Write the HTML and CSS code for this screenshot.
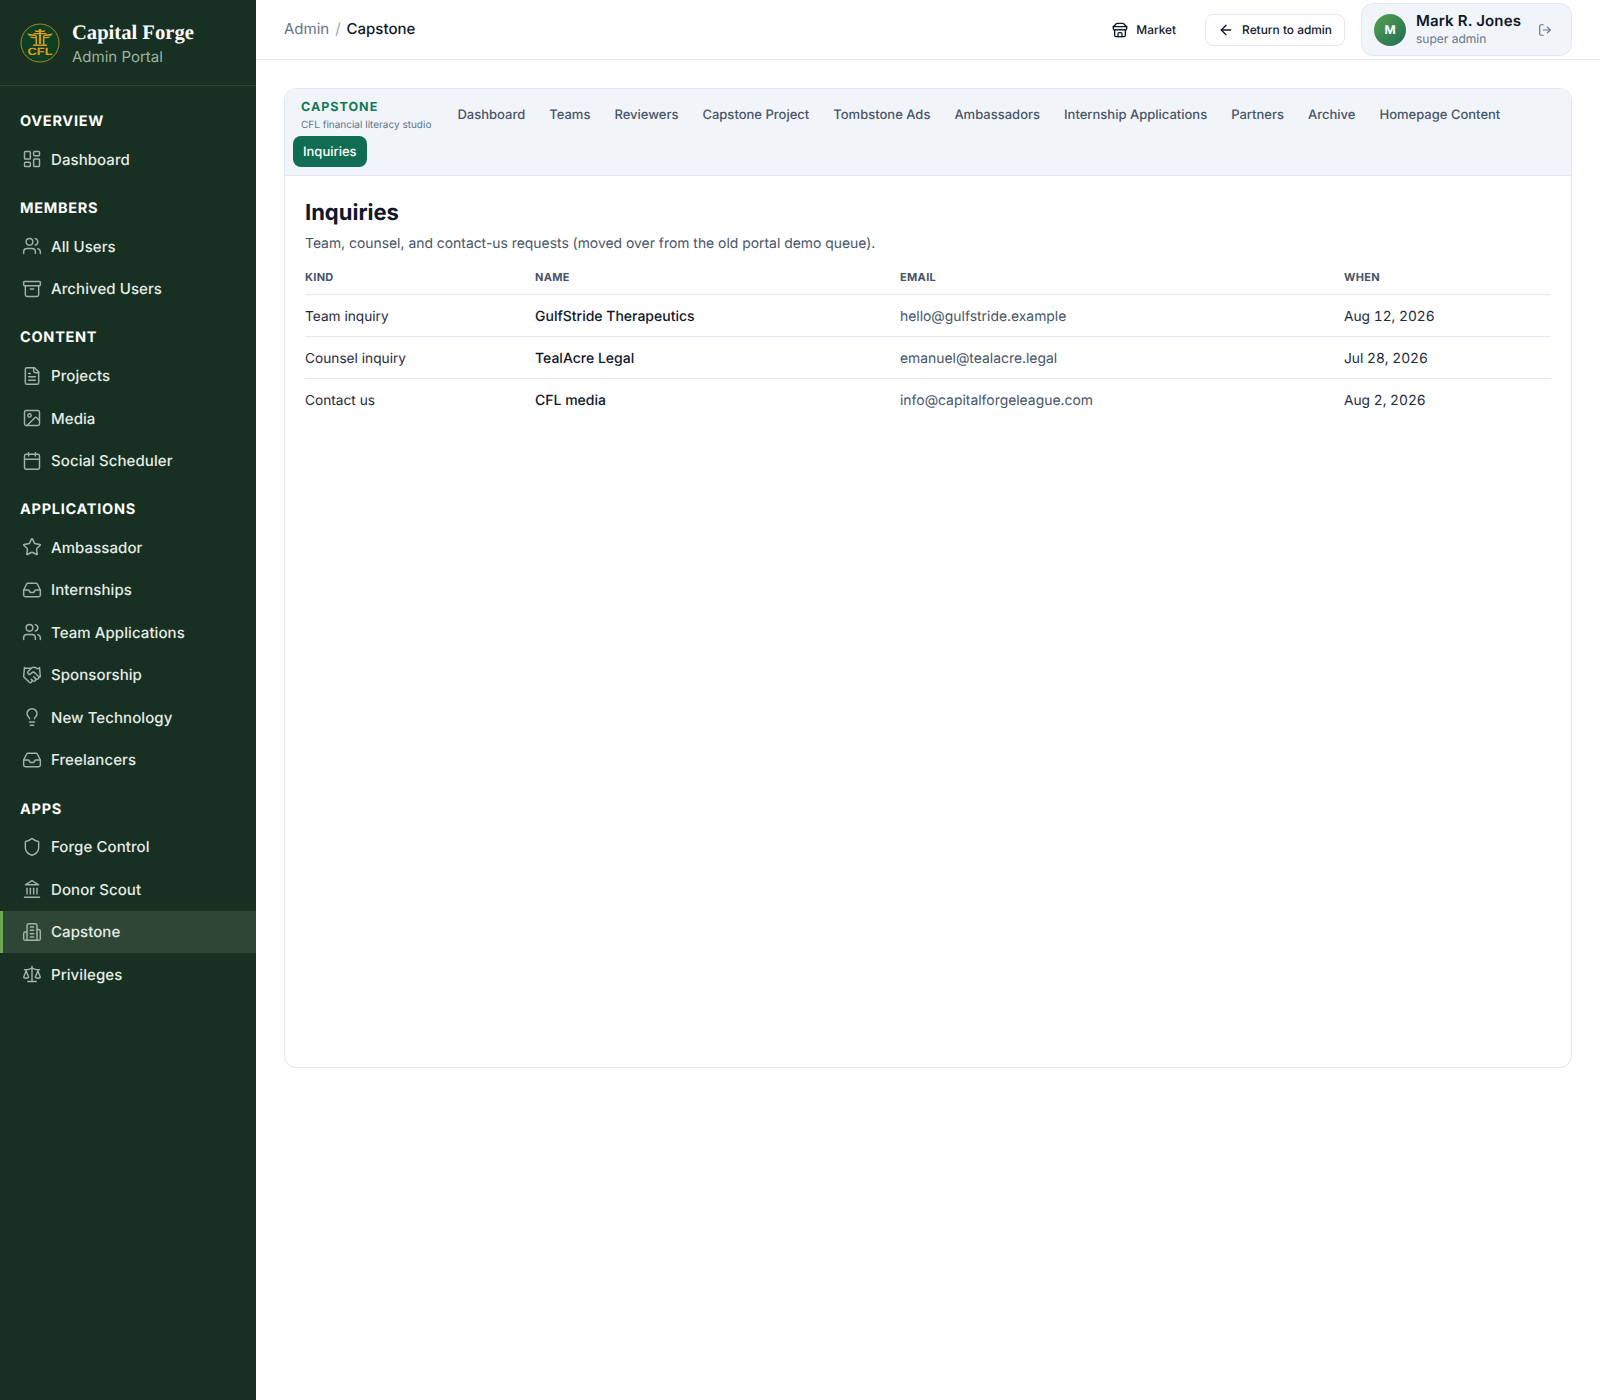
FILE: index.html
```html
<!DOCTYPE html>
<html lang="en">
<head>
<meta charset="utf-8">
<title>Capstone Inquiries</title>
<link rel="stylesheet" href="styles.css">
</head>
<body>
<svg class="sprite" width="0" height="0" aria-hidden="true">
<defs>
<symbol id="i-dash" viewBox="0 0 24 24"><rect x="3" y="3" width="7" height="9" rx="1"/><rect x="14" y="3" width="7" height="5" rx="1"/><rect x="14" y="12" width="7" height="9" rx="1"/><rect x="3" y="16" width="7" height="5" rx="1"/></symbol>
<symbol id="i-users" viewBox="0 0 24 24"><path d="M16 21v-2a4 4 0 0 0-4-4H6a4 4 0 0 0-4 4v2"/><circle cx="9" cy="7" r="4"/><path d="M22 21v-2a4 4 0 0 0-3-3.87"/><path d="M16 3.13a4 4 0 0 1 0 7.75"/></symbol>
<symbol id="i-archive" viewBox="0 0 24 24"><rect x="2" y="3" width="20" height="5" rx="1"/><path d="M4 8v11a2 2 0 0 0 2 2h12a2 2 0 0 0 2-2V8"/><path d="M10 12h4"/></symbol>
<symbol id="i-file" viewBox="0 0 24 24"><path d="M15 2H6a2 2 0 0 0-2 2v16a2 2 0 0 0 2 2h12a2 2 0 0 0 2-2V7Z"/><path d="M14 2v4a2 2 0 0 0 2 2h4"/><path d="M10 9H8"/><path d="M16 13H8"/><path d="M16 17H8"/></symbol>
<symbol id="i-image" viewBox="0 0 24 24"><rect x="3" y="3" width="18" height="18" rx="2"/><circle cx="9" cy="9" r="2"/><path d="m21 15-3.086-3.086a2 2 0 0 0-2.828 0L6 21"/></symbol>
<symbol id="i-cal" viewBox="0 0 24 24"><path d="M8 2v4"/><path d="M16 2v4"/><rect x="3" y="4" width="18" height="18" rx="2"/><path d="M3 10h18"/></symbol>
<symbol id="i-star" viewBox="0 0 24 24"><path d="M11.525 2.295a.53.53 0 0 1 .95 0l2.31 4.679a2.123 2.123 0 0 0 1.595 1.16l5.166.756a.53.53 0 0 1 .294.904l-3.736 3.638a2.123 2.123 0 0 0-.611 1.878l.882 5.14a.53.53 0 0 1-.771.56l-4.618-2.428a2.122 2.122 0 0 0-1.973 0L6.396 21.01a.53.53 0 0 1-.77-.56l.881-5.139a2.122 2.122 0 0 0-.611-1.879L2.16 9.795a.53.53 0 0 1 .294-.906l5.165-.755a2.122 2.122 0 0 0 1.597-1.16z"/></symbol>
<symbol id="i-inbox" viewBox="0 0 24 24"><polyline points="22 12 16 12 14 15 10 15 8 12 2 12"/><path d="M5.45 5.11 2 12v6a2 2 0 0 0 2 2h16a2 2 0 0 0 2-2v-6l-3.45-6.89A2 2 0 0 0 16.76 4H7.24a2 2 0 0 0-1.79 1.11z"/></symbol>
<symbol id="i-hand" viewBox="0 0 24 24"><path d="m11 17 2 2a1 1 0 1 0 3-3"/><path d="m14 14 2.5 2.5a1 1 0 1 0 3-3l-3.88-3.88a3 3 0 0 0-4.24 0l-.88.88a1 1 0 1 1-3-3l2.81-2.81a5.79 5.79 0 0 1 7.06-.87l.47.28a2 2 0 0 0 1.42.25L21 4"/><path d="m21 3 1 11h-2"/><path d="M3 3 2 14l6.5 6.5a1 1 0 1 0 3-3"/><path d="M3 4h8"/></symbol>
<symbol id="i-bulb" viewBox="0 0 24 24"><path d="M15 14c.2-1 .7-1.7 1.5-2.5 1-.9 1.5-2.2 1.5-3.5A6 6 0 0 0 6 8c0 1 .2 2.2 1.5 3.5.7.7 1.3 1.5 1.5 2.5"/><path d="M9 18h6"/><path d="M10 22h4"/></symbol>
<symbol id="i-shield" viewBox="0 0 24 24"><path d="M20 13c0 5-3.5 7.5-7.66 8.95a1 1 0 0 1-.67-.01C7.5 20.5 4 18 4 13V6a1 1 0 0 1 1-1c2 0 4.5-1.2 6.24-2.72a1.17 1.17 0 0 1 1.52 0C14.51 3.81 17 5 19 5a1 1 0 0 1 1 1z"/></symbol>
<symbol id="i-bank" viewBox="0 0 24 24"><path d="M3 22h18"/><path d="M6 18v-7"/><path d="M10 18v-7"/><path d="M14 18v-7"/><path d="M18 18v-7"/><path d="M12 2l8 5H4z"/></symbol>
<symbol id="i-build" viewBox="0 0 24 24"><path d="M6 22V4a2 2 0 0 1 2-2h8a2 2 0 0 1 2 2v18Z"/><path d="M6 12H4a2 2 0 0 0-2 2v6a2 2 0 0 0 2 2h2"/><path d="M18 9h2a2 2 0 0 1 2 2v9a2 2 0 0 1-2 2h-2"/><path d="M10 6h4"/><path d="M10 10h4"/><path d="M10 14h4"/><path d="M10 18h4"/></symbol>
<symbol id="i-scale" viewBox="0 0 24 24"><path d="m16 16 3-8 3 8c-.87.65-1.92 1-3 1s-2.13-.35-3-1Z"/><path d="m2 16 3-8 3 8c-.87.65-1.92 1-3 1s-2.13-.35-3-1Z"/><path d="M7 21h10"/><path d="M12 3v18"/><path d="M3 7h2c2 0 5-1 7-2 2 1 5 2 7 2h2"/></symbol>
<symbol id="i-store" viewBox="0 0 24 24"><path d="m2 7 4.41-4.41A2 2 0 0 1 7.83 2h8.34a2 2 0 0 1 1.42.59L22 7"/><path d="M4 12v8a2 2 0 0 0 2 2h12a2 2 0 0 0 2-2v-8"/><path d="M15 22v-4a2 2 0 0 0-2-2h-2a2 2 0 0 0-2 2v4"/><path d="M2 7h20"/><path d="M22 7v3a2 2 0 0 1-2 2 2.7 2.7 0 0 1-1.59-.63.7.7 0 0 0-.82 0A2.7 2.7 0 0 1 16 12a2.7 2.7 0 0 1-1.59-.63.7.7 0 0 0-.82 0A2.7 2.7 0 0 1 12 12a2.7 2.7 0 0 1-1.59-.63.7.7 0 0 0-.82 0A2.7 2.7 0 0 1 8 12a2.7 2.7 0 0 1-1.59-.63.7.7 0 0 0-.82 0A2.7 2.7 0 0 1 4 12a2 2 0 0 1-2-2V7"/></symbol>
<symbol id="i-back" viewBox="0 0 24 24"><path d="m12 19-7-7 7-7"/><path d="M19 12H5"/></symbol>
<symbol id="i-out" viewBox="0 0 24 24"><path d="M9 21H5a2 2 0 0 1-2-2V5a2 2 0 0 1 2-2h4"/><polyline points="16 17 21 12 16 7"/><path d="M21 12H9"/></symbol>
</defs>
</svg>
<div class="app">
  <aside class="sidebar">
    <div class="brand">
      <svg class="logo" viewBox="0 0 40 40" aria-hidden="true">
        <circle cx="20" cy="20" r="19" fill="#0e3f22" stroke="#a98a22" stroke-width="1"/>
        <path d="M7 10.5l9.5 1.2v1.4l-7.5-.4zM33 10.5l-9.5 1.2v1.4l7.5-.4zM9.5 13.6l7 .3v1.3l-5.3-.3zM30.5 13.6l-7 .3v1.3l5.3-.3z" fill="#d99a1f"/>
        <path d="M14.5 7.5h11l-1 1.4h-9zM13.5 10h13v1.2h-13zM18.9 6h2.2v15h-2.2zM15.5 13h1.6v9h-1.6zM22.9 13h1.6v9h-1.6zM13 21.6h14v1.4h-14z" fill="#d99a1f"/>
        <text x="20" y="32" class="logo-text" textLength="25" lengthAdjust="spacingAndGlyphs">CFL</text>
      </svg>
      <div class="brand-text">
        <div class="brand-name">Capital Forge</div>
        <div class="brand-sub">Admin Portal</div>
      </div>
    </div>
    <nav class="nav">
      <section class="nav-group">
        <h2 class="nav-label">OVERVIEW</h2>
        <a class="nav-item"><svg class="nav-icon"><use href="#i-dash"/></svg>Dashboard</a>
      </section>
      <section class="nav-group">
        <h2 class="nav-label">MEMBERS</h2>
        <a class="nav-item"><svg class="nav-icon"><use href="#i-users"/></svg>All Users</a>
        <a class="nav-item"><svg class="nav-icon"><use href="#i-archive"/></svg>Archived Users</a>
      </section>
      <section class="nav-group">
        <h2 class="nav-label">CONTENT</h2>
        <a class="nav-item"><svg class="nav-icon"><use href="#i-file"/></svg>Projects</a>
        <a class="nav-item"><svg class="nav-icon"><use href="#i-image"/></svg>Media</a>
        <a class="nav-item"><svg class="nav-icon"><use href="#i-cal"/></svg>Social Scheduler</a>
      </section>
      <section class="nav-group">
        <h2 class="nav-label">APPLICATIONS</h2>
        <a class="nav-item"><svg class="nav-icon"><use href="#i-star"/></svg>Ambassador</a>
        <a class="nav-item"><svg class="nav-icon"><use href="#i-inbox"/></svg>Internships</a>
        <a class="nav-item"><svg class="nav-icon"><use href="#i-users"/></svg>Team Applications</a>
        <a class="nav-item"><svg class="nav-icon"><use href="#i-hand"/></svg>Sponsorship</a>
        <a class="nav-item"><svg class="nav-icon"><use href="#i-bulb"/></svg>New Technology</a>
        <a class="nav-item"><svg class="nav-icon"><use href="#i-inbox"/></svg>Freelancers</a>
      </section>
      <section class="nav-group">
        <h2 class="nav-label">APPS</h2>
        <a class="nav-item"><svg class="nav-icon"><use href="#i-shield"/></svg>Forge Control</a>
        <a class="nav-item"><svg class="nav-icon"><use href="#i-bank"/></svg>Donor Scout</a>
        <a class="nav-item is-active"><svg class="nav-icon"><use href="#i-build"/></svg>Capstone</a>
        <a class="nav-item"><svg class="nav-icon"><use href="#i-scale"/></svg>Privileges</a>
      </section>
    </nav>
  </aside>
  <div class="main">
    <header class="topbar">
      <div class="crumbs"><span class="crumb-muted">Admin</span><span class="crumb-sep">/</span><span class="crumb-current">Capstone</span></div>
      <div class="top-actions">
        <a class="market"><svg class="top-icon"><use href="#i-store"/></svg>Market</a>
        <a class="return"><svg class="top-icon"><use href="#i-back"/></svg>Return to admin</a>
        <div class="user">
          <div class="avatar">M</div>
          <div class="user-text">
            <div class="user-name">Mark R. Jones</div>
            <div class="user-role">super admin</div>
          </div>
          <svg class="logout"><use href="#i-out"/></svg>
        </div>
      </div>
    </header>
    <main class="content">
      <div class="card">
        <div class="tabs">
          <div class="tabs-brand">
            <div class="tabs-title">CAPSTONE</div>
            <div class="tabs-sub">CFL financial literacy studio</div>
          </div>
          <a class="tab">Dashboard</a>
          <a class="tab">Teams</a>
          <a class="tab">Reviewers</a>
          <a class="tab">Capstone Project</a>
          <a class="tab">Tombstone Ads</a>
          <a class="tab">Ambassadors</a>
          <a class="tab">Internship Applications</a>
          <a class="tab">Partners</a>
          <a class="tab">Archive</a>
          <a class="tab">Homepage Content</a>
          <a class="tab is-active">Inquiries</a>
        </div>
        <div class="card-body">
          <h1 class="title">Inquiries</h1>
          <p class="lead">Team, counsel, and contact-us requests (moved over from the old portal demo queue).</p>
          <table class="table">
            <thead>
              <tr><th class="col-kind">KIND</th><th class="col-name">NAME</th><th class="col-email">EMAIL</th><th class="col-when">WHEN</th></tr>
            </thead>
            <tbody>
              <tr><td>Team inquiry</td><td class="strong">GulfStride Therapeutics</td><td class="muted">hello@gulfstride.example</td><td class="date">Aug 12, 2026</td></tr>
              <tr><td>Counsel inquiry</td><td class="strong">TealAcre Legal</td><td class="muted">emanuel@tealacre.legal</td><td class="date">Jul 28, 2026</td></tr>
              <tr><td>Contact us</td><td class="strong">CFL media</td><td class="muted">info@capitalforgeleague.com</td><td class="date">Aug 2, 2026</td></tr>
            </tbody>
          </table>
        </div>
      </div>
    </main>
  </div>
</div>
</body>
</html>
```
FILE: styles.css
```css
* { box-sizing: border-box; }
html, body { margin: 0; padding: 0; }
body { font-family: Inter, "Liberation Sans", sans-serif; color: #0f172a; background: #fff; text-rendering: geometricPrecision; }
.sprite { position: absolute; }
svg use { fill: none; stroke: currentColor; }
.app { display: flex; min-height: 1400px; }

.sidebar { width: 256px; flex: none; background: #173022; color: #e6ece7; }
.brand { height: 86px; display: flex; align-items: center; gap: 12px; padding: 0 20px; border-bottom: 1px solid #2b4534; }
.logo { width: 40px; height: 40px; flex: none; }
.logo-text { font-family: "Liberation Sans", sans-serif; font-size: 10.5px; font-weight: 700; fill: #e0a021; text-anchor: middle; }
.brand-text { padding-top: 2px; }
.brand-name { font-family: "Liberation Serif", serif; font-weight: 700; font-size: 20.6px; line-height: 26px; color: #fff; }
.brand-sub { font-size: 15px; line-height: 22px; color: #9db0a2; }
.nav { padding-top: 24px; }
.nav-group { margin-bottom: 16.4px; }
.nav-label { margin: 0 0 4px; padding: 0 20px; font-size: 14.5px; line-height: 24px; font-weight: 700; letter-spacing: .05em; color: #fff; }
.nav-item { display: flex; align-items: center; gap: 9px; height: 42.5px; padding-left: 22px; font-size: 15px; font-weight: 500; letter-spacing: .005em; color: #e6ece7; }
.nav-item.is-active { background: #2f4637; box-shadow: inset 3px 0 0 #69a84f; }
.nav-icon { width: 20px; height: 20px; flex: none; color: #a3b2a8; stroke-width: 1.75; stroke-linecap: round; stroke-linejoin: round; }

.main { flex: 1; min-width: 0; }
.topbar { height: 60px; display: flex; align-items: center; justify-content: space-between; padding: 0 28px; border-bottom: 1px solid #e2e8f0; }
.crumbs { display: flex; align-items: center; gap: 6px; font-size: 15px; line-height: 22px; margin-top: -2px; }
.crumb-muted { color: #64748b; }
.crumb-sep { color: #94a3b8; }
.crumb-current { color: #0f172a; font-weight: 500; }
.top-actions { display: flex; align-items: center; gap: 16px; }
.market, .return { display: flex; align-items: center; gap: 8px; height: 32px; font-size: 11.9px; font-weight: 500; color: #0f172a; }
.market { padding: 0 12px; margin-right: 1px; }
.return { padding: 0 12px; border: 1px solid #e2e8f0; border-radius: 8px; }
.top-icon { width: 16px; height: 16px; flex: none; stroke-width: 2; stroke-linecap: round; stroke-linejoin: round; }
.user { display: flex; align-items: center; gap: 10px; width: 211px; height: 53px; padding: 0 12px; background: #f1f5f9; border: 1px solid #e2e8f0; border-radius: 12px; }
.avatar { width: 32px; height: 32px; flex: none; border-radius: 50%; display: flex; align-items: center; justify-content: center; background: linear-gradient(135deg, #55a350, #1f6b55); color: #fff; font-size: 12px; font-weight: 700; }
.user-text { flex: 1; min-width: 0; margin-top: -2px; }
.user-name { font-size: 15px; line-height: 20px; font-weight: 600; letter-spacing: .01em; color: #0f172a; }
.user-role { font-size: 12px; line-height: 16px; color: #64748b; }
.logout { width: 14px; height: 14px; flex: none; margin-right: 7px; color: #64748b; stroke-width: 2; stroke-linecap: round; stroke-linejoin: round; }

.content { padding: 28px; }
.card { min-height: 980px; border: 1px solid #e2e8f0; border-radius: 12px; overflow: hidden; background: #fff; }
.tabs { display: flex; flex-wrap: wrap; align-items: center; gap: 4px; padding: 8px; background: #f1f5f9; border-bottom: 1px solid #e2e8f0; }
.tabs-brand { height: 35px; padding: 1px 8px 0; margin-right: 4px; }
.tabs-title { font-size: 12.5px; line-height: 19px; font-weight: 700; letter-spacing: .08em; color: #0f7a55; }
.tabs-sub { font-size: 10px; line-height: 16px; color: #64748b; }
.tab { padding: 7px 10px 5px; font-size: 13px; line-height: 19px; font-weight: 500; color: #475569; border-radius: 8px; }
.tab.is-active { background: #116d52; color: #fff; }
.card-body { padding: 22px 20px 20px; }
.title { margin: 0; font-size: 22px; line-height: 30px; font-weight: 700; color: #0f172a; }
.lead { margin: 6px 0 0; font-size: 13.9px; line-height: 21px; color: #475569; }
.table { width: 100%; margin-top: 5px; border-collapse: collapse; table-layout: fixed; font-size: 13.7px; }
.table th { height: 34px; text-align: left; font-size: 11px; font-weight: 700; letter-spacing: .03em; color: #475569; border-bottom: 1px solid #e2e8f0; padding: 0; }
.table td { height: 42px; padding: 12px 0 0; line-height: 20px; vertical-align: baseline; color: #1e293b; border-bottom: 1px solid #e2e8f0; }
.table tbody tr:last-child td { border-bottom: 0; }
.col-kind { width: 230px; }
.col-name { width: 365px; }
.col-email { width: 444px; }
.table .strong { font-size: 14px; font-weight: 500; color: #0f172a; }
.table .muted { font-size: 13.9px; color: #475569; }
.table .date { font-size: 13.75px; font-variant-numeric: tabular-nums; }
```
